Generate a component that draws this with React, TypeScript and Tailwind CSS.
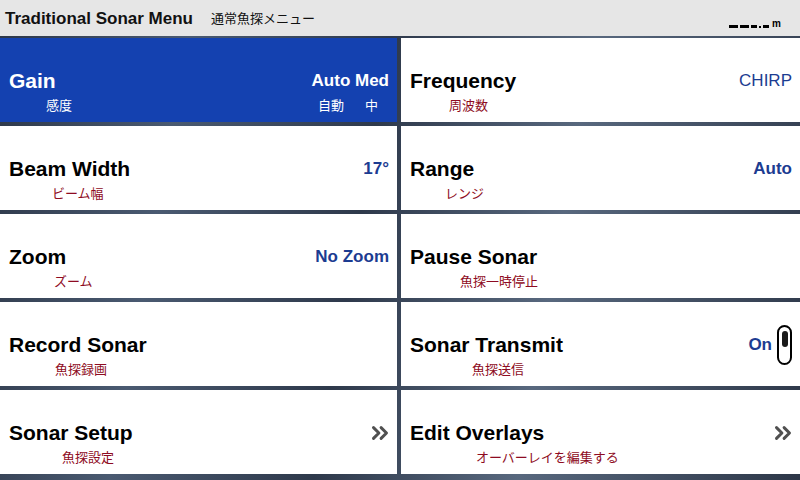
import React from 'react'
import { ChevronsRight } from 'lucide-react'

type Item = {
    title: string
    sub: string
    subPad: string
    value?: string
    valueWeight?: string
    kind?: 'toggle' | 'more'
    active?: boolean
    valueSub?: React.ReactNode
}

const items: Item[] = [
    { title: 'Gain', sub: '感度', subPad: 'pl-[37px]', value: 'Auto Med', active: true, valueSub: (<><span>自動</span><span>中</span></>) },
    { title: 'Frequency', sub: '周波数', subPad: 'pl-[39px]', value: 'CHIRP', valueWeight: 'font-normal' },
    { title: 'Beam Width', sub: 'ビーム幅', subPad: 'pl-[43px]', value: '17°' },
    { title: 'Range', sub: 'レンジ', subPad: 'pl-[35px]', value: 'Auto' },
    { title: 'Zoom', sub: 'ズーム', subPad: 'pl-[45px]', value: 'No Zoom' },
    { title: 'Pause Sonar', sub: '魚探一時停止', subPad: 'pl-[50px]' },
    { title: 'Record Sonar', sub: '魚探録画', subPad: 'pl-[46px]' },
    { title: 'Sonar Transmit', sub: '魚探送信', subPad: 'pl-[62px]', value: 'On', kind: 'toggle' },
    { title: 'Sonar Setup', sub: '魚探設定', subPad: 'pl-[53px]', kind: 'more' },
    { title: 'Edit Overlays', sub: 'オーバーレイを編集する', subPad: 'pl-[66px]', kind: 'more' },
]

function Toggle() {
    return (
        <div className="w-[15px] h-[40px] rounded-full border-2 border-black bg-white flex justify-center pt-[4px]">
            <div className="w-[6px] h-[16px] rounded-full bg-[#1a1a1a]" />
        </div>
    )
}

function Tile({ item }: { item: Item }) {
    const bg = item.active ? 'bg-[#1441b0]' : 'bg-white'
    const titleColor = item.active ? 'text-white' : 'text-black'
    const valueColor = item.active ? 'text-white' : 'text-[#1c3c91]'
    const subColor = item.active ? 'text-white' : 'text-[#8e0b22]'

    return (
        <div className={`${bg} h-[84px] pl-[9px] pr-[8px] pt-[31px] flex flex-col`}>
            <div className="flex items-center justify-between h-[24px]">
                <span className={`${titleColor} text-[21px] font-bold leading-[24px]`}>{item.title}</span>
                <div className="flex items-center gap-[5px]">
                    {item.value && (
                        <span className={`${valueColor} text-[17px] ${item.valueWeight ?? 'font-bold'} leading-[24px]`}>{item.value}</span>
                    )}
                    {item.kind === 'toggle' && <Toggle />}
                    {item.kind === 'more' && <ChevronsRight size={26} strokeWidth={2.75} className="text-[#505050] -mr-[4px]" />}
                </div>
            </div>
            <div className="flex justify-between mt-[4px] h-[16px]">
                <span className={`${subColor} ${item.subPad} text-[13px] leading-[16px] font-['Noto_Sans_CJK_JP',sans-serif]`}>{item.sub}</span>
                {item.valueSub && (
                    <span className={`${subColor} text-[13px] leading-[16px] flex gap-[21px] pr-[11px] font-['Noto_Sans_CJK_JP',sans-serif]`}>{item.valueSub}</span>
                )}
            </div>
        </div>
    )
}

export default function App() {
    return (
        <div className="w-[800px] h-[480px] overflow-hidden font-['Liberation_Sans',Arial,sans-serif] bg-[linear-gradient(100deg,#2c3647_0%,#4a5a71_22%,#2e394b_45%,#58687e_68%,#2d3748_100%)]">
            {/* header */}
            <div className="h-[36px] bg-[#e6e6e6] flex items-center px-[5px]">
                <span className="text-[17px] font-bold text-[#111] leading-none">Traditional Sonar Menu</span>
                <span className="ml-[18px] text-[13px] text-[#111] font-['Noto_Sans_CJK_JP',sans-serif]">通常魚探メニュー</span>
                <div className="ml-auto mt-[10px] mr-[14px] flex items-end gap-[2px]">
                    <div className="w-[9px] h-[3px] bg-black" />
                    <div className="w-[9px] h-[3px] bg-black" />
                    <div className="w-[6px] h-[3px] bg-black" />
                    <div className="w-[2px] h-[2px] bg-black" />
                    <div className="w-[6px] h-[3px] bg-black" />
                    <span className="text-[10px] leading-[9px] font-bold text-black ml-[1px]">m</span>
                </div>
            </div>

            {/* menu */}
            <div className="pt-[2px] grid grid-cols-[397px_1fr] gap-x-[4px] gap-y-[4px]">
                {items.map((item) => (
                    <Tile key={item.title} item={item} />
                ))}
            </div>
        </div>
    )
}
